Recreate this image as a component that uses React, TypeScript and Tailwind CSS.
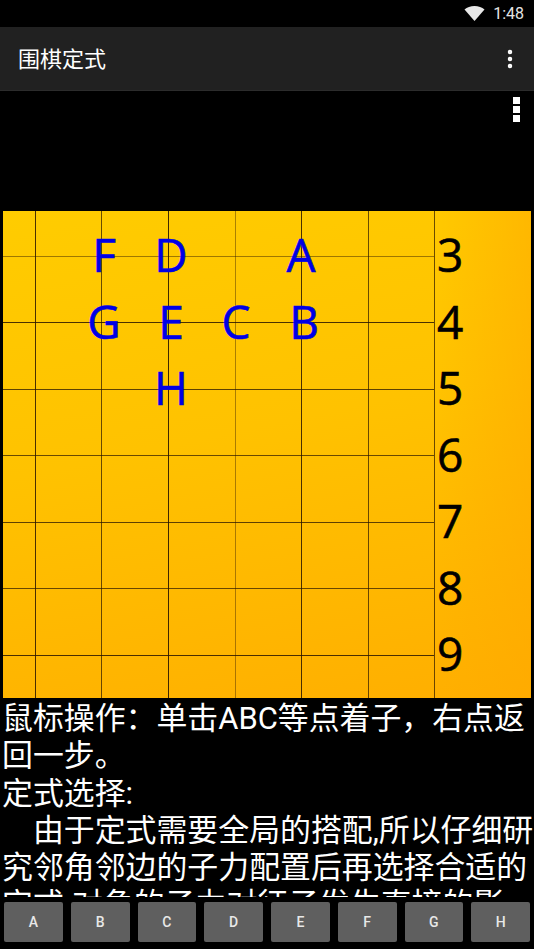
import { MoreVertical } from 'lucide-react';

const buttons = ['A', 'B', 'C', 'D', 'E', 'F', 'G', 'H'];

// board coordinates, relative to the top left corner of the board
const verticals = [
  { x: 32, o: 0.85 },
  { x: 98, o: 0.7 },
  { x: 165, o: 0.9 },
  { x: 232, o: 0.4 },
  { x: 298, o: 0.85 },
  { x: 365, o: 0.7 },
  { x: 431, o: 0.7 },
];
const horizontals = [
  { y: 45, o: 0.45 },
  { y: 111, o: 0.85 },
  { y: 178, o: 0.75 },
  { y: 244, o: 0.7 },
  { y: 311, o: 0.75 },
  { y: 377, o: 0.7 },
  { y: 444, o: 0.85 },
];

const marks = [
  { t: 'F', x: 101, y: 43 },
  { t: 'D', x: 168, y: 43 },
  { t: 'A', x: 298, y: 43 },
  { t: 'G', x: 101, y: 110 },
  { t: 'E', x: 168, y: 110 },
  { t: 'C', x: 233, y: 110 },
  { t: 'B', x: 301, y: 110 },
  { t: 'H', x: 168, y: 176 },
];

const numbers = [
  { t: '3', y: 43 },
  { t: '4', y: 110 },
  { t: '5', y: 176 },
  { t: '6', y: 243 },
  { t: '7', y: 309 },
  { t: '8', y: 376 },
  { t: '9', y: 442 },
];

const ui = { fontFamily: 'Roboto, "Noto Sans CJK SC", sans-serif' };

function Board() {
  return (
    <div className="relative mx-[3px] h-[487px] w-[528px] shrink-0 bg-[linear-gradient(168deg,#ffcc00_0%,#ffc200_45%,#ffae00_100%)]">
      <div className="absolute inset-y-0 right-0 w-[90px] bg-gradient-to-r from-transparent to-[#ffa80080]" />
      {/* grid */}
      <svg className="absolute inset-0" width="528" height="487">
        {verticals.map((l) => (
          <rect key={l.x} x={l.x} y="0" width="1" height="487" fill="#2a1500" opacity={l.o} />
        ))}
        {horizontals.map((l) => (
          <rect key={l.y} x="0" y={l.y} width="431" height="1" fill="#2a1500" opacity={l.o} />
        ))}
      </svg>

      {marks.map((m) => (
        <span
          key={m.t}
          className="absolute -translate-x-1/2 -translate-y-1/2 font-['Open_Sans',sans-serif] text-[46px] leading-none text-[#0000e6] [-webkit-text-stroke-width:0.6px]"
          style={{ left: m.x, top: m.y }}
        >
          {m.t}
        </span>
      ))}

      {numbers.map((n) => (
        <span
          key={n.t}
          className="absolute left-[434px] -translate-y-1/2 font-['Open_Sans',sans-serif] text-[46px] leading-none text-black [-webkit-text-stroke-width:0.6px]"
          style={{ top: n.y }}
        >
          {n.t}
        </span>
      ))}
    </div>
  );
}

export default function App() {
  return (
    <div className="flex h-[949px] w-[534px] flex-col overflow-hidden bg-black" style={ui}>
      {/* Status bar */}
      <div className="flex h-[27px] shrink-0 items-center justify-end pr-[10px] text-[16px] text-[#e4e4e4]">
        <svg width="21" height="15" viewBox="0 0 21 15" className="mr-[8px]">
          <path d="M0.5 3.5C3 1.3 6.5 0 10.5 0s7.5 1.3 10 3.5L10.5 15z" fill="#e8e8e8" />
        </svg>
        1:48
      </div>

      {/* Toolbar */}
      <div className="flex h-[63px] shrink-0 items-center justify-between bg-[#212121] pl-[18px] pr-[12px] shadow-[0_1px_0_#2c2c2c]">
        <span className="pt-[2px] text-[22px] text-white">围棋定式</span>
        <MoreVertical className="h-[24px] w-[24px] text-white" strokeWidth={2.5} />
      </div>

      {/* Menu dots */}
      <div className="flex h-[121px] shrink-0 justify-end pr-[14px] pt-[7px]">
        <div className="flex h-fit flex-col gap-[2px]">
          <div className="h-[7px] w-[7px] bg-white" />
          <div className="h-[7px] w-[7px] bg-white" />
          <div className="h-[7px] w-[7px] bg-white" />
        </div>
      </div>

      <Board />

      {/* Help text */}
      <div className="min-h-0 flex-1 overflow-hidden pl-[2px] pt-[2px] text-[30.9px] leading-[37.3px] text-white">
        <div>{'鼠标操作\uFF1A单击ABC等点着子\uFF0C右点返回一步。'}</div>
        <div>定式选择:</div>
        <div>{'\u3000由于定式需要全局的搭配,所以仔细研究邻角邻边的子力配置后再选择合适的定式.对角的子力对征子发生直接的影'}</div>
      </div>

      {/* Buttons */}
      <div className="grid h-[52px] shrink-0 grid-cols-8 gap-[8px] px-[4px] pb-[7px] pt-[5px]">
        {buttons.map((b) => (
          <button key={b} className="rounded-[2px] bg-[#5f5f5f] text-[14px] font-medium text-[#e8e8e8]">
            {b}
          </button>
        ))}
      </div>
    </div>
  );
}
